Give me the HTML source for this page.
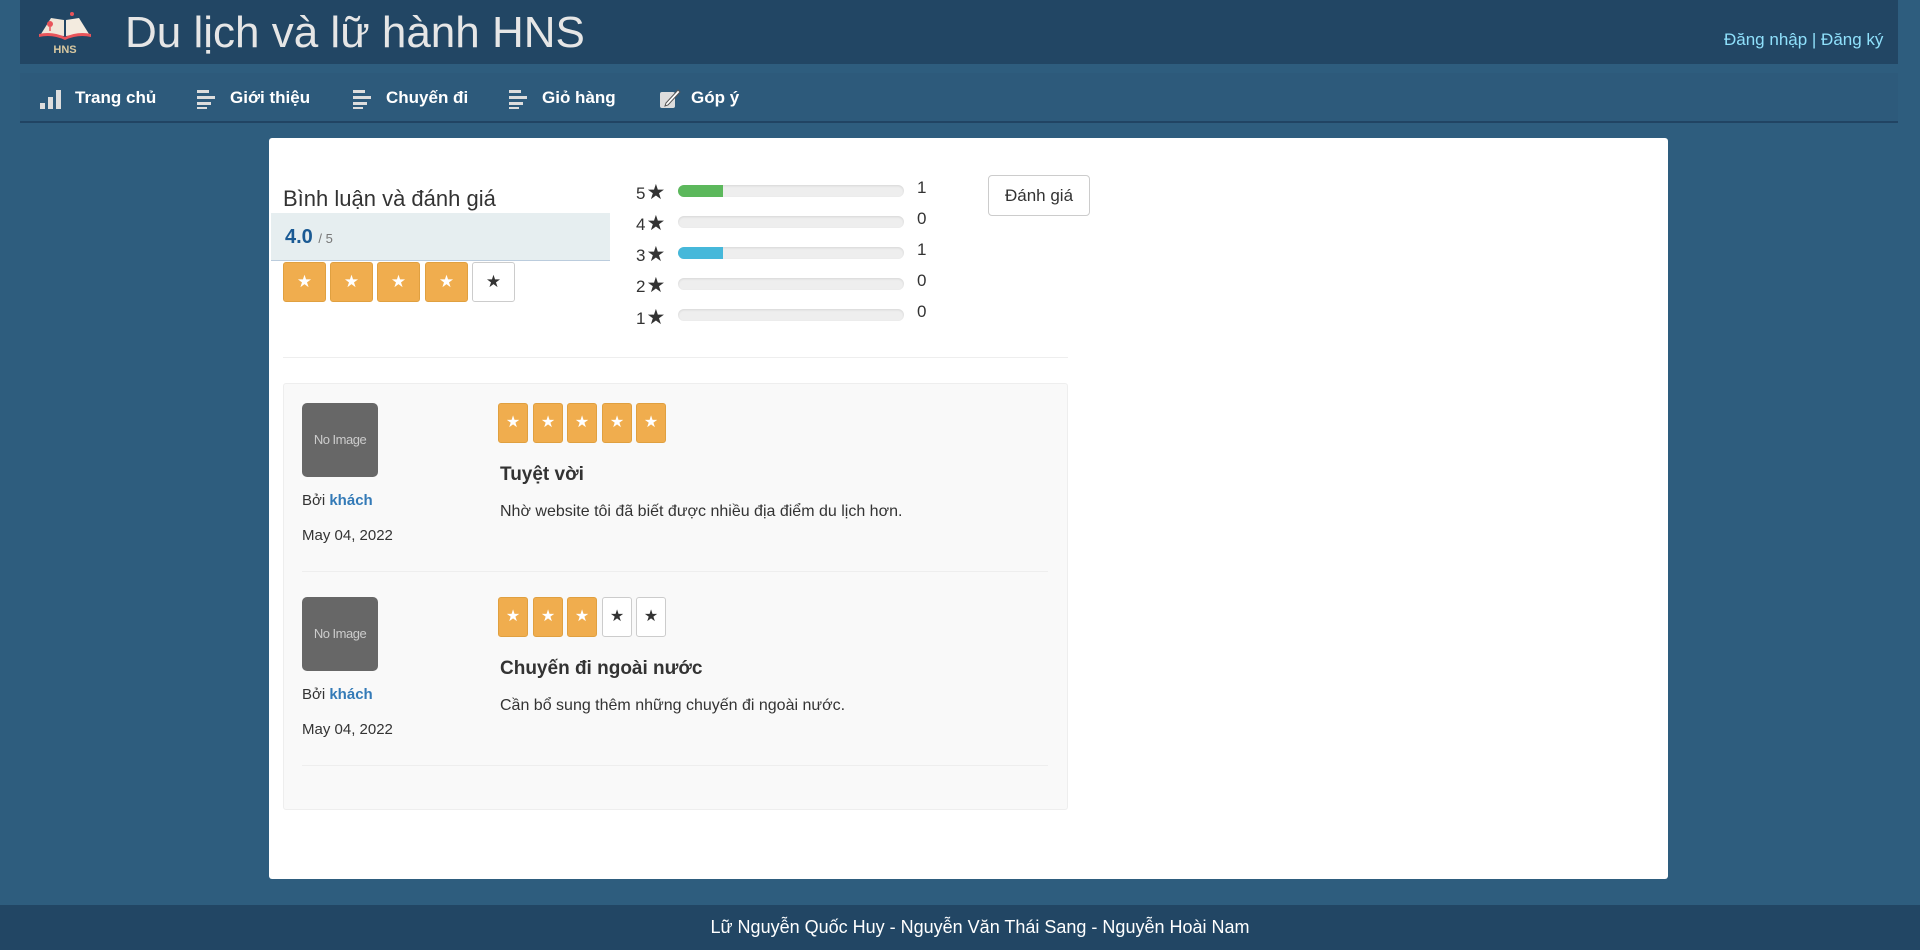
<!DOCTYPE html>
<html><head><meta charset="utf-8">
<style>
*{margin:0;padding:0;box-sizing:border-box}
body{width:1920px;height:950px;background:#2e5d7e;font-family:"Liberation Sans",Arial,sans-serif;position:relative;overflow:hidden;color:#333}
.abs{position:absolute}
#hdr{left:20px;top:0;width:1878px;height:64px;background:#224664}
#nav{left:20px;top:73px;width:1878px;height:50px;background:#2d5a7b;border-bottom:2px solid #214463}
.title{left:125px;top:8px;font-size:44px;color:#e6e6e6;white-space:nowrap}
.login{left:1724px;top:30px;font-size:17px;color:#8fe0fb;white-space:nowrap}
.ni{top:88px;font-size:17px;font-weight:bold;color:#fff;white-space:nowrap}
.card{left:269px;top:138px;width:1399px;height:741px;background:#fff;border-radius:3px}
.star{width:43px;height:40px;border:1px solid #e0a040;background:#f0ad4e;border-radius:3px;color:#fff;font-size:17px;text-align:center;line-height:38px}
.star.e{background:#fff;border-color:#ccc;color:#333}
.ss{width:30px;height:40px;border:1px solid #e0a040;background:#f0ad4e;border-radius:3px;color:#fff;font-size:16px;text-align:center;line-height:38px}
.ss.e{background:#fff;border-color:#ccc;color:#333}
.bar{left:678px;width:226px;height:12px;border-radius:6px;background:#eee;box-shadow:inset 0 1px 2px rgba(0,0,0,.1);overflow:hidden}
.lbl{left:636px;font-size:17px;color:#333;white-space:nowrap}
.lbl span{font-size:21px;margin-left:1px}
.cnt{left:917px;font-size:17px;color:#333}
.av{width:76px;height:74px;background:#676767;border-radius:5px;color:#ccc;font-size:13px;text-align:center;line-height:74px;letter-spacing:-.5px}
.sm{font-size:15px;color:#333}
.sm b{color:#337ab7}
.rt{font-size:19px;font-weight:bold;color:#333}
.tx{font-size:16px;color:#333}
</style></head><body>
<div class="abs" id="hdr"></div>
<div class="abs" id="nav"></div>
<svg class="abs" style="left:37px;top:10px" width="56" height="46" viewBox="0 0 56 46">
<path d="M4 24 L14 8 L27 10 L27 26 Z" fill="#f0e6d8"/><path d="M52 24 L42 8 L29 10 L29 26 Z" fill="#f3ebdf"/>
<path d="M2 24 Q15 21 28 27 Q41 21 54 24 L54 27 Q41 24 28 30 Q15 24 2 27Z" fill="#e8545a"/>
<circle cx="13" cy="14" r="3" fill="#e8545a"/><path d="M13 17 L13 21" stroke="#e8545a" stroke-width="1.5"/>
<circle cx="35" cy="4" r="2" fill="#e8545a"/>
<text x="28" y="43" text-anchor="middle" font-family="Liberation Sans" font-weight="bold" font-size="11" fill="#d8c8a0">HNS</text>
</svg>
<div class="abs title">Du lịch và lữ hành HNS</div>
<div class="abs login">Đăng nhập | Đăng ký</div>
<svg class="abs" style="left:39px;top:88px" width="24" height="22"><rect x="1" y="15" width="5" height="6" fill="#ddd"/><rect x="9" y="9" width="5" height="12" fill="#ddd"/><rect x="17" y="2" width="5" height="19" fill="#ddd"/></svg>
<div class="abs ni" style="left:75px">Trang chủ</div>
<svg class="abs" style="left:197px;top:89px" width="22" height="20"><rect x="0" y="1" width="12" height="3" fill="#ddd"/><rect x="0" y="7" width="18" height="3" fill="#ddd"/><rect x="0" y="13" width="14" height="3" fill="#ddd"/><rect x="0" y="18" width="10" height="2" fill="#ddd"/></svg>
<div class="abs ni" style="left:230px">Giới thiệu</div>
<svg class="abs" style="left:353px;top:89px" width="22" height="20"><rect x="0" y="1" width="12" height="3" fill="#ddd"/><rect x="0" y="7" width="18" height="3" fill="#ddd"/><rect x="0" y="13" width="14" height="3" fill="#ddd"/><rect x="0" y="18" width="10" height="2" fill="#ddd"/></svg>
<div class="abs ni" style="left:386px">Chuyến đi</div>
<svg class="abs" style="left:509px;top:89px" width="22" height="20"><rect x="0" y="1" width="12" height="3" fill="#ddd"/><rect x="0" y="7" width="18" height="3" fill="#ddd"/><rect x="0" y="13" width="14" height="3" fill="#ddd"/><rect x="0" y="18" width="10" height="2" fill="#ddd"/></svg>
<div class="abs ni" style="left:542px">Giỏ hàng</div>
<svg class="abs" style="left:659px;top:88px" width="22" height="22"><rect x="1" y="4" width="15" height="16" rx="2" fill="#ddd"/><path d="M7 15 L19 2 L21 4 L9 17 L6 18Z" fill="#fff" stroke="#555" stroke-width="1"/></svg>
<div class="abs ni" style="left:691px">Góp ý</div>

<div class="abs card"></div>
<div class="abs" style="left:283px;top:186px;font-size:22px;color:#333">Bình luận và đánh giá</div>
<div class="abs" style="left:271px;top:213px;width:339px;height:48px;background:#e6eef0;border-bottom:1px solid #bcd"></div>
<div class="abs" style="left:285px;top:226px;font-size:20px;font-weight:bold;color:#1a5a94">4.0 <span style="font-size:13px;font-weight:normal;color:#777">/ 5</span></div>
<div class="abs star" style="left:283px;top:262px">★</div>
<div class="abs star" style="left:330px;top:262px">★</div>
<div class="abs star" style="left:377px;top:262px">★</div>
<div class="abs star" style="left:425px;top:262px">★</div>
<div class="abs star e" style="left:472px;top:262px">★</div>

<div class="abs lbl" style="top:180px">5<span>★</span></div><div class="abs bar" style="top:185px"><div style="width:45px;height:12px;background:#5cb85c"></div></div><div class="abs cnt" style="top:178px">1</div>
<div class="abs lbl" style="top:211px">4<span>★</span></div><div class="abs bar" style="top:216px"></div><div class="abs cnt" style="top:209px">0</div>
<div class="abs lbl" style="top:242px">3<span>★</span></div><div class="abs bar" style="top:247px"><div style="width:45px;height:12px;background:#46b8da"></div></div><div class="abs cnt" style="top:240px">1</div>
<div class="abs lbl" style="top:273px">2<span>★</span></div><div class="abs bar" style="top:278px"></div><div class="abs cnt" style="top:271px">0</div>
<div class="abs lbl" style="top:305px">1<span>★</span></div><div class="abs bar" style="top:309px"></div><div class="abs cnt" style="top:302px">0</div>

<div class="abs" style="left:988px;top:175px;width:102px;height:41px;border:1px solid #ccc;border-radius:4px;font-size:17px;text-align:center;line-height:39px;color:#333">Đánh giá</div>
<div class="abs" style="left:283px;top:357px;width:785px;height:1px;background:#eee"></div>

<div class="abs" style="left:283px;top:383px;width:785px;height:427px;background:#f9f9f9;border:1px solid #eee;border-radius:3px"></div>

<div class="abs av" style="left:302px;top:403px">No Image</div>
<div class="abs sm" style="left:302px;top:492px">Bởi <b>khách</b></div>
<div class="abs sm" style="left:302px;top:527px">May 04, 2022</div>
<div class="abs ss" style="left:498px;top:403px">★</div><div class="abs ss" style="left:533px;top:403px">★</div><div class="abs ss" style="left:567px;top:403px">★</div><div class="abs ss" style="left:602px;top:403px">★</div><div class="abs ss" style="left:636px;top:403px">★</div>
<div class="abs rt" style="left:500px;top:464px">Tuyệt vời</div>
<div class="abs tx" style="left:500px;top:503px">Nhờ website tôi đã biết được nhiều địa điểm du lịch hơn.</div>
<div class="abs" style="left:302px;top:571px;width:746px;height:1px;background:#eee"></div>

<div class="abs av" style="left:302px;top:597px">No Image</div>
<div class="abs sm" style="left:302px;top:686px">Bởi <b>khách</b></div>
<div class="abs sm" style="left:302px;top:721px">May 04, 2022</div>
<div class="abs ss" style="left:498px;top:597px">★</div><div class="abs ss" style="left:533px;top:597px">★</div><div class="abs ss" style="left:567px;top:597px">★</div><div class="abs ss e" style="left:602px;top:597px">★</div><div class="abs ss e" style="left:636px;top:597px">★</div>
<div class="abs rt" style="left:500px;top:658px">Chuyến đi ngoài nước</div>
<div class="abs tx" style="left:500px;top:697px">Cần bổ sung thêm những chuyến đi ngoài nước.</div>
<div class="abs" style="left:302px;top:765px;width:746px;height:1px;background:#eee"></div>

<div class="abs" style="left:0;top:905px;width:1920px;height:45px;background:#224664;color:#fff;font-size:18px;text-align:center;line-height:45px;padding-left:40px">Lữ Nguyễn Quốc Huy - Nguyễn Văn Thái Sang - Nguyễn Hoài Nam</div>
</body></html>
